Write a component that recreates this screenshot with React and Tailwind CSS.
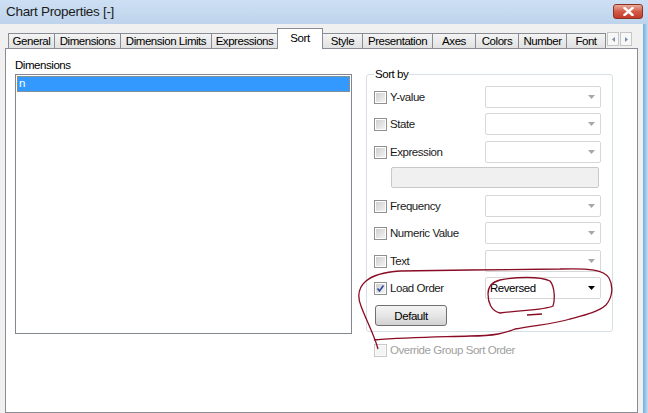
import React from 'react';

const tabs = [
  { label: 'General', w: 'w-[47px]' },
  { label: 'Dimensions', w: 'w-[67px]' },
  { label: 'Dimension Limits', w: 'w-[92px]' },
  { label: 'Expressions', w: 'w-[67px]' },
  { label: 'Sort', w: 'w-[46px]', active: true },
  { label: 'Style', w: 'w-[41px]' },
  { label: 'Presentation', w: 'w-[71px]' },
  { label: 'Axes', w: 'w-[44px]' },
  { label: 'Colors', w: 'w-[44px]' },
  { label: 'Number', w: 'w-[49px]' },
  { label: 'Font', w: 'w-[40px]' },
];

const rows = [
  { label: 'Y-value', mt: 'mt-0' },
  { label: 'State', mt: 'mt-[5px]' },
  { label: 'Expression', mt: 'mt-[6px]' },
];

const rows2 = [
  { label: 'Frequency', mt: 'mt-[7px]' },
  { label: 'Numeric Value', mt: 'mt-[5px]' },
  { label: 'Text', mt: 'mt-[6px]' },
];

const Checkbox = ({ checked, disabled }) => (
  <div
    className={`w-[13px] h-[13px] shrink-0 border flex items-center justify-center p-[1px] ${
      disabled ? 'border-[#c9c9c9] bg-[#fafafa]' : 'border-[#8e8f8f] bg-white'
    }`}
  >
    <div
      className={`w-full h-full relative ${
        disabled ? 'bg-[#f4f4f4]' : 'bg-gradient-to-br from-[#cfcfcf] to-[#f3f3f3]'
      }`}
    >
      {checked && (
        <svg viewBox="0 0 9 9" className="absolute inset-0 w-full h-full">
          <path d="M1.5 4.5 L3.5 7 L7.5 1.5" fill="none" stroke="#2a4a9c" strokeWidth="1.6" />
        </svg>
      )}
    </div>
  </div>
);

const Combo = ({ value, active }) => (
  <div className="w-[116px] h-[22px] shrink-0 border border-[#d7d7d7] rounded-[2px] bg-white flex items-center justify-between pl-[4px] pr-[5px]">
    <span className="text-black">{value}</span>
    <svg width="7" height="4" viewBox="0 0 7 4">
      <path d="M0 0 L7 0 L3.5 4 Z" fill={active ? '#000000' : '#a7a7a7'} />
    </svg>
  </div>
);

const SortRow = ({ label, mt, checked, value, active }) => (
  <div className={`flex items-center h-[22px] pl-[7px] ${mt}`}>
    <Checkbox checked={checked} />
    <span className="ml-[3px] w-[95px] text-[#1a1a1a] whitespace-nowrap">{label}</span>
    <Combo value={value} active={active} />
  </div>
);

export default function App() {
  return (
    <div
      className="relative w-[648px] h-[413px] overflow-hidden bg-[#f0f0f0] text-[11.5px] tracking-[-0.45px] leading-[14px] text-black whitespace-nowrap"
      style={{ fontFamily: '"Liberation Sans", Arial, sans-serif' }}
    >
      {/* title bar */}
      <div className="h-[24px] flex items-center justify-between pl-[6px] pr-[5px] bg-gradient-to-b from-[#cddff3] to-[#bed4ec]">
        <span className="text-[13.5px] tracking-[-0.3px] text-[#1b1b1b]">Chart Properties [-]</span>
        <div className="w-[30px] h-[15px] mt-[-2px] rounded-[3px] border border-[#8a3325] bg-gradient-to-b from-[#e9ab9c] via-[#d45a48] to-[#c33b29] flex items-center justify-center">
          <svg width="11" height="9" viewBox="0 0 11 9">
            <path d="M1.5 1 L9.5 8 M9.5 1 L1.5 8" stroke="#ffffff" strokeWidth="2.4" strokeLinecap="square" />
          </svg>
        </div>
      </div>

      <div className="flex h-[389px]">
        <div className="w-[643px] flex flex-col">
          {/* tab strip */}
          <div className="h-[24px] flex items-end pl-[9px] relative">
            {tabs.map((t) =>
              t.active ? (
                <div
                  key={t.label}
                  className={`${t.w} h-[21px] -mb-px -ml-px relative z-10 bg-white border border-b-0 border-[#898c95] flex justify-center pt-[2px]`}
                >
                  {t.label}
                </div>
              ) : (
                <div
                  key={t.label}
                  className={`${t.w} h-[15px] -ml-px border border-b-0 border-[#898c95] bg-gradient-to-b from-[#f4f4f4] to-[#e1e1e1] flex justify-center items-center overflow-hidden`}
                >
                  {t.label}
                </div>
              )
            )}
            <div className="flex ml-[1px] mb-[2px] gap-[1px]">
              <div className="w-[12px] h-[14px] border border-[#c6c6c6] bg-[#f7f7f7] flex items-center justify-center">
                <svg width="3" height="5" viewBox="0 0 3 5"><path d="M3 0 L0 2.5 L3 5 Z" fill="#7d8ca6" /></svg>
              </div>
              <div className="w-[12px] h-[14px] border border-[#c6c6c6] bg-[#f7f7f7] flex items-center justify-center">
                <svg width="3" height="5" viewBox="0 0 3 5"><path d="M0 0 L3 2.5 L0 5 Z" fill="#7d8ca6" /></svg>
              </div>
            </div>
          </div>

          {/* tab page */}
          <div className="ml-[5px] w-[633px] flex-1 bg-white border border-[#898c95] flex">
            <div className="pl-[9px] pt-[9px]">
              <div className="h-[14px]">Dimensions</div>
              <div className="mt-[2px] w-[337px] h-[260px] border border-[#828790] p-px">
                <div className="h-[16px] bg-[#3399ff] border border-dotted border-[#c78a3a] text-white pl-[1px] leading-[13px]">
                  n
                </div>
              </div>
            </div>

            <div className="ml-[14px] pt-[25px]">
              <div className="relative w-[247px] h-[258px] border border-[#d5dfe5] rounded-[3px] pt-[11px]">
                <span className="absolute left-[7px] top-[-8px] bg-white px-[1px]">Sort by</span>
                {rows.map((r) => (
                  <SortRow key={r.label} label={r.label} mt={r.mt} />
                ))}
                <div className="ml-[24px] mt-[4px] w-[208px] h-[21px] border border-[#c9c9c9] rounded-[2px] bg-[#f0f0f0]" />
                {rows2.map((r) => (
                  <SortRow key={r.label} label={r.label} mt={r.mt} />
                ))}
                <SortRow label="Load Order" mt="mt-[5px]" checked value="Reversed" active />
                <div className="ml-[8px] mt-[6px] w-[72px] h-[21px] rounded-[3px] border border-[#707070] bg-gradient-to-b from-[#f4f4f4] via-[#e6e6e6] to-[#d2d2d2] flex items-center justify-center">
                  Default
                </div>
              </div>
              <div className="flex items-center pl-[8px] mt-[11px] h-[14px]">
                <Checkbox disabled />
                <span className="ml-[3px] text-[#a0a0a0]">Override Group Sort Order</span>
              </div>
            </div>
          </div>
        </div>
        <div className="w-[5px] bg-gradient-to-r from-[#6fb0dc] to-[#c4dbf1]" />
      </div>

      {/* hand-drawn annotation */}
      <svg className="absolute inset-0 pointer-events-none" width="648" height="413" viewBox="0 0 648 413">
        <path
          d="M378 349 C374 334, 366 320, 361 306 C357 296, 359 287, 366 281 C374 274, 386 272, 400 271 L470 270 L560 269 C590 268, 604 270, 609 278 C614 287, 612 298, 606 305 C598 312, 585 315, 570 319 C555 324, 535 325, 515 329 C505 333, 495 336, 470 336 C440 337, 410 337, 374 340"
          fill="none"
          stroke="#8a0c24"
          strokeWidth="1.3"
        />
        <path
          d="M500 280 C515 277, 540 276, 550 281 C555 287, 555 300, 553 306 C545 310, 525 310, 500 313 C491 311, 488 302, 488 294 C488 287, 492 282, 500 280"
          fill="none"
          stroke="#8a0c24"
          strokeWidth="1.3"
        />
        <path d="M527 315 L542 314" fill="none" stroke="#8a0c24" strokeWidth="1.3" />
      </svg>
    </div>
  );
}
